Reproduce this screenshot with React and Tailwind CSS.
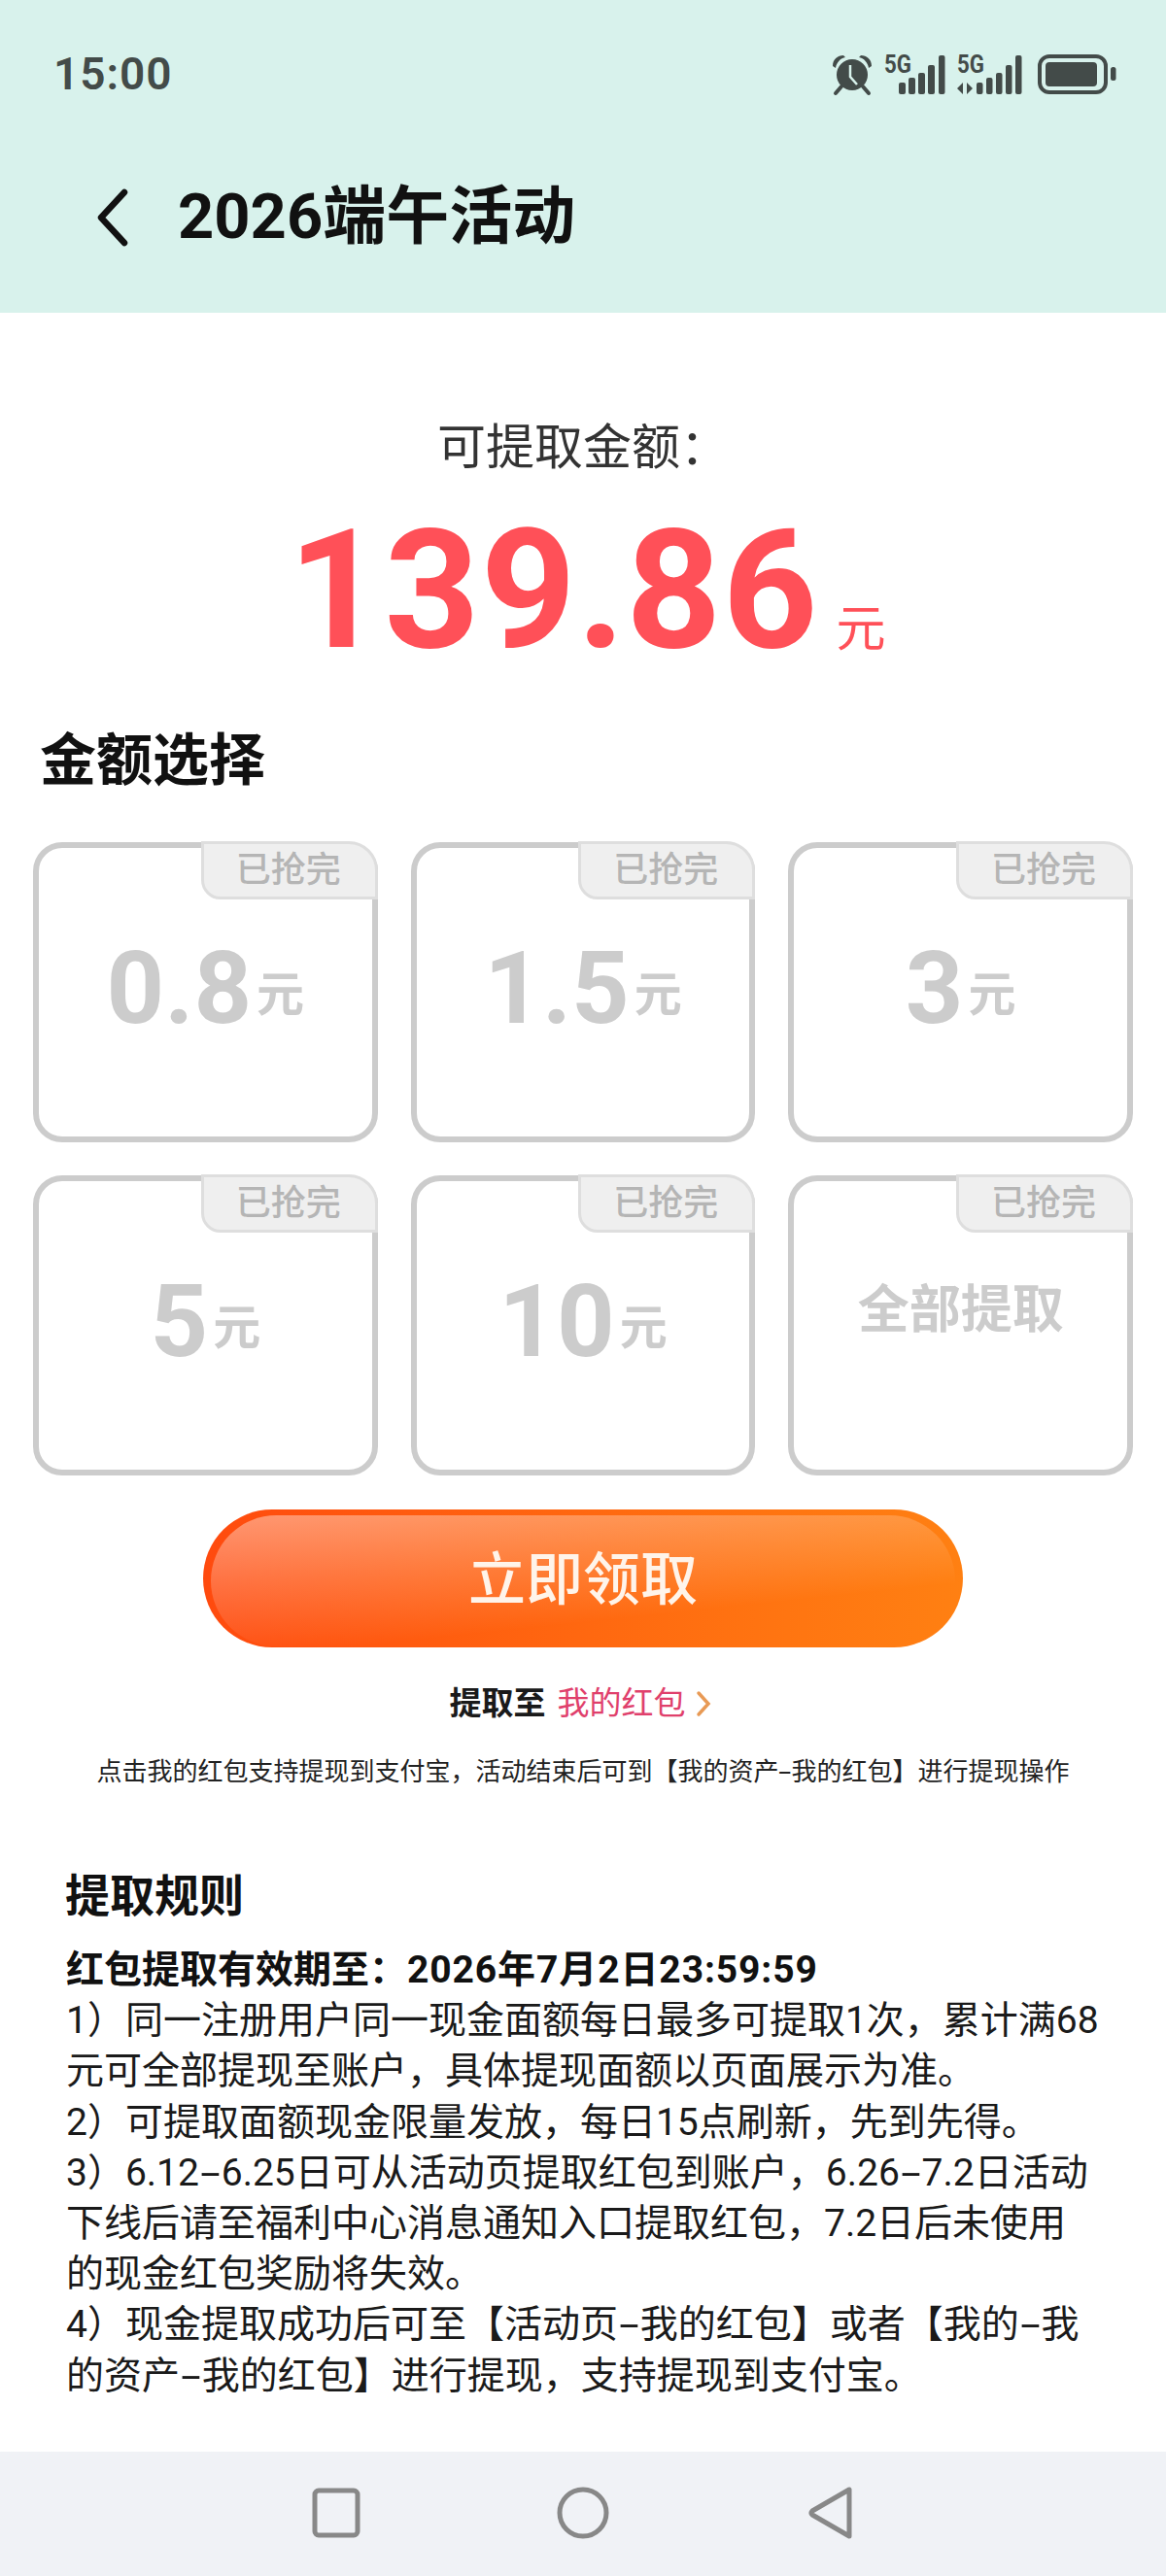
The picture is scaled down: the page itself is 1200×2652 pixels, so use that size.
const cards = [
  { amount: '0.8' },
  { amount: '1.5' },
  { amount: '3' },
  { amount: '5' },
  { amount: '10' },
  { label: '全部提取' },
];

const rules = [
  '1）同一注册用户同一现金面额每日最多可提取1次，累计满68',
  '元可全部提现至账户，具体提现面额以页面展示为准。',
  '2）可提取面额现金限量发放，每日15点刷新，先到先得。',
  '3）6.12-6.25日可从活动页提取红包到账户，6.26-7.2日活动',
  '下线后请至福利中心消息通知入口提取红包，7.2日后未使用',
  '的现金红包奖励将失效。',
  '4）现金提取成功后可至【活动页-我的红包】或者【我的-我',
  '的资产-我的红包】进行提现，支持提现到支付宝。',
];

// the screenshot's font has a much longer hyphen than Roboto
function WideHyphens({ text, className }) {
  const parts = text.split('-');
  return parts.map((part, i) => (
    <span key={i}>
      {part}
      {i < parts.length - 1 && <span className={className}>-</span>}
    </span>
  ));
}

function StatusIcons() {
  return (
    <svg width="296" height="60" viewBox="0 -12 296 60" fill="#434b49">
      {/* alarm */}
      <circle cx="22" cy="24" r="16" />
      <path d="M2 15 C2 8 7 4 13 4 L15 6 C10 7 6 11 5 17 Z M42 15 C42 8 37 4 31 4 L29 6 C34 7 38 11 39 17 Z" />
      <path d="M11 36 L5 43 M33 36 L39 43" stroke="#434b49" strokeWidth="4" strokeLinecap="round" />
      <path d="M20 14 L20 26 L27 34" stroke="#d8f2ec" strokeWidth="2.5" fill="none" />
      {/* 5G with bars */}
      <text x="55" y="22" fontFamily="Roboto" fontWeight="700" fontSize="26" textLength="28" lengthAdjust="spacingAndGlyphs">5G</text>
      <rect x="70" y="32" width="7" height="12" rx="2" />
      <rect x="80" y="27" width="7" height="17" rx="2" />
      <rect x="90" y="22" width="7" height="22" rx="2" />
      <rect x="100" y="14" width="7" height="30" rx="2" />
      <rect x="111" y="4" width="6.5" height="40" rx="2" />
      <text x="130" y="22" fontFamily="Roboto" fontWeight="700" fontSize="26" textLength="28" lengthAdjust="spacingAndGlyphs">5G</text>
      <path d="M130 38 L136 32 L136 44 Z M140 32 L140 44 L146 38 Z" />
      <rect x="150" y="32" width="6.5" height="12" rx="2" />
      <rect x="160" y="27" width="6.5" height="17" rx="2" />
      <rect x="170" y="22" width="6.5" height="22" rx="2" />
      <rect x="180" y="14" width="6.5" height="30" rx="2" />
      <rect x="190" y="4" width="6.5" height="40" rx="2" />
      {/* battery */}
      <rect x="215" y="5" width="68" height="37" rx="10" fill="none" stroke="#434b49" strokeWidth="4" />
      <rect x="221" y="11" width="53" height="25" rx="4" />
      <rect x="288" y="16" width="5.5" height="14" rx="2.5" />
    </svg>
  );
}

function AmountCard({ amount, label }) {
  return (
    <div className="relative h-[309px] rounded-[30px] border-[6px] border-[#cccccc] bg-white">
      <div className="absolute -top-[7px] -right-[6px] flex h-[60px] w-[182px] items-center justify-center rounded-tr-[30px] rounded-bl-[20px] border-[3px] border-[#dedede] bg-[#efefef] pr-[2px] text-[36px] leading-none font-medium text-[#b5b5b5]">
        已抢完
      </div>
      {label ? (
        <div className="flex h-full items-center justify-center pb-[30px] text-[53px] font-bold text-[#cccccc]">{label}</div>
      ) : (
        <div className="flex h-full items-center justify-center pb-[8px] text-[#cccccc]">
          <span className="text-[104px] leading-none font-bold">{amount}</span>
          <span className="mt-[14px] ml-[5px] text-[49px] leading-none font-bold">元</span>
        </div>
      )}
    </div>
  );
}

export default function App() {
  return (
    <div className="flex h-[2652px] w-[1200px] flex-col bg-white font-['Roboto','Noto_Sans_CJK_SC',sans-serif] text-[#111111]">
      <header className="h-[322px] bg-[#d8f2ec] px-[55px] pt-[50px]">
        <div className="flex h-[52px] items-center justify-between">
          <span className="text-[46px] leading-none font-semibold tracking-[1px] text-[#434b49]">15:00</span>
          <div className="-mt-[8px] mb-[2px] -mr-[6px]"><StatusIcons /></div>
        </div>
        <div className="mt-[89px] flex items-center pl-[44px]">
          <svg width="34" height="60" viewBox="0 0 34 60" fill="none" stroke="#111111" strokeWidth="6.5" strokeLinecap="round" strokeLinejoin="round">
            <path d="M29 4 L5 30 L29 56" />
          </svg>
          <h1 className="ml-[50px] text-[65px] leading-none font-bold">2026端午活动</h1>
        </div>
      </header>

      <main className="flex-1 pt-[110px]">
        <div className="text-center text-[50px] leading-[58px] text-[#333333]">可提取金额：</div>
        <div className="mt-[33px] flex items-end justify-center pl-[8px] text-[#ff5058]">
          <span className="text-[171px] leading-[170px] font-bold tracking-[1px]">139.86</span>
          <span className="mb-[20px] ml-[18px] text-[51px] leading-none">元</span>
        </div>

        <h2 className="mt-[55px] pl-[41px] text-[58px] leading-[70px] font-bold">金额选择</h2>

        <div className="mt-[49px] grid grid-cols-3 gap-[34px] px-[34px]">
          {cards.map((c, i) => <AmountCard key={i} {...c} />)}
        </div>

        <button className="mx-auto mt-[35px] block h-[142px] w-[782px] rounded-full bg-gradient-to-r from-[#ff4a0e] to-[#ff8012] px-[8px] pt-[6px] pb-[1px]">
          <span className="flex h-full items-center justify-center rounded-full bg-[linear-gradient(174deg,rgba(255,255,255,0.42)_0%,rgba(255,255,255,0.2)_35%,rgba(255,255,255,0)_70%)] text-[59px] font-medium text-[#fff4ea]">
            立即领取
          </span>
        </button>

        <div className="mt-[36px] flex items-center justify-center pr-[6px] text-[33px] leading-[44px]">
          <span className="font-bold text-[#1a1a1a]">提取至</span>
          <span className="ml-[12px] text-[#e0406c]">我的红包</span>
          <svg className="ml-[10px]" width="16" height="28" viewBox="0 0 16 28" fill="none" stroke="#e89a55" strokeWidth="3.5" strokeLinecap="round">
            <path d="M3 3 L13 14 L3 25" />
          </svg>
        </div>

        <p className="mt-[30px] text-center text-[26px] leading-[36px] text-[#222222]">
          <WideHyphens text="点击我的红包支持提现到支付宝，活动结束后可到【我的资产-我的红包】进行提现操作" className="mx-[3px] inline-block scale-x-[1.8]" />
        </p>

        <section className="mt-[80px] px-[68px]">
          <h3 className="-ml-[1px] text-[46px] leading-[60px] font-bold">提取规则</h3>
          <div className="mt-[20px] text-[39px] leading-[52.2px] text-[#1a1a1a]">
            <div className="font-bold text-[#111111]">红包提取有效期至：<span className="tracking-[0.9px]">2026年7月2日23:59:59</span></div>
            {rules.map((line, i) => (
              <div key={i} className="whitespace-nowrap">
                <WideHyphens text={line} className="mx-[6px] inline-block scale-x-[1.9]" />
              </div>
            ))}
          </div>
        </section>
      </main>

      <nav className="flex h-[128px] items-center bg-[#f0f2f6] pb-[2px] pl-[321px]">
        <svg width="560" height="56" viewBox="0 0 560 56" fill="none" stroke="#888888" strokeWidth="5">
          <rect x="3" y="5" width="44" height="46" rx="4" />
          <circle cx="279" cy="28" r="24" />
          <path d="M553 4 L553 52 L515 30 Q513 28 515 26 Z" strokeLinejoin="round" />
        </svg>
      </nav>
    </div>
  );
}
